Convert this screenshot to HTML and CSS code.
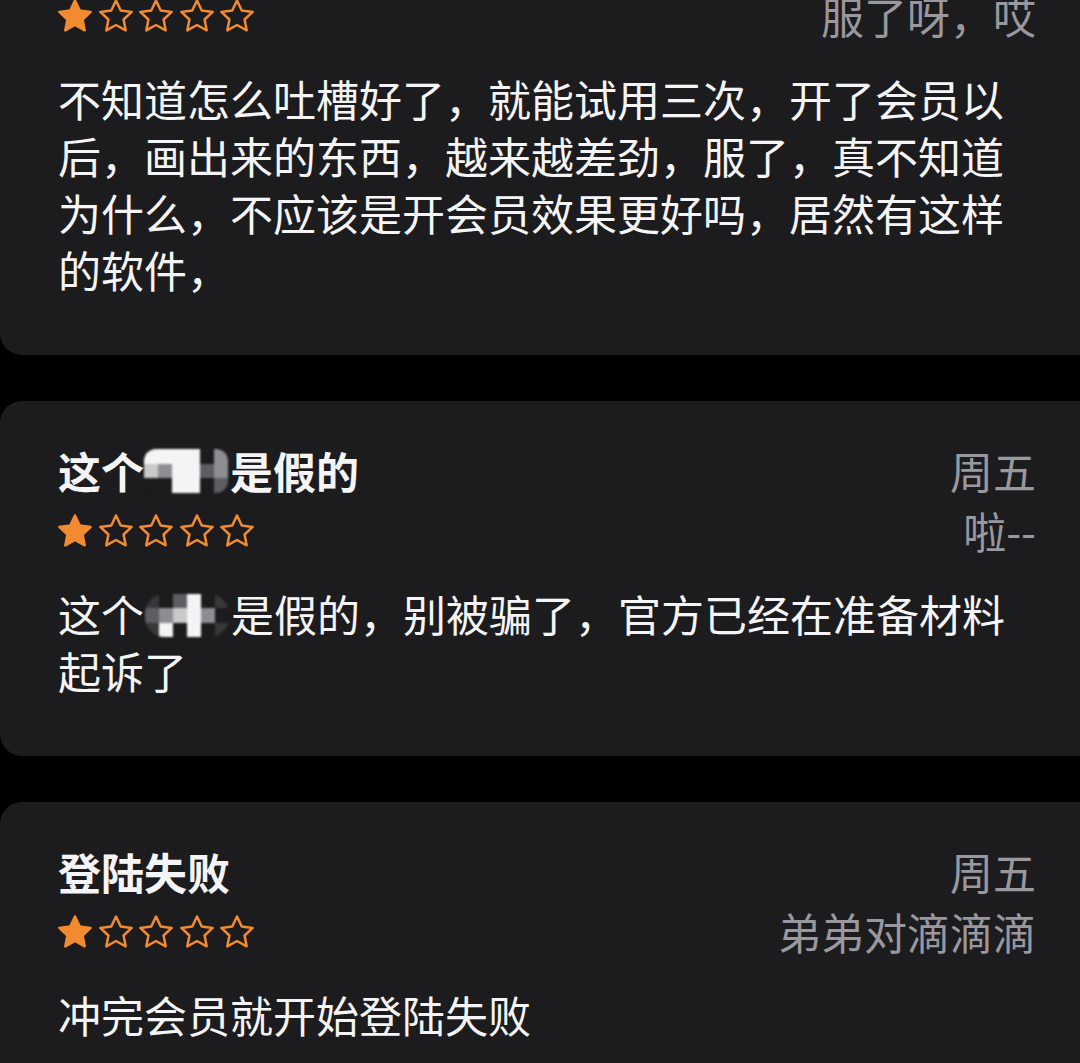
FILE: index.html
```html
<!DOCTYPE html>
<html lang="zh-CN">
<head>
<meta charset="utf-8">
<title>评论</title>
<link rel="stylesheet" href="styles.css">
</head>
<body>
<svg width="0" height="0" class="defs" aria-hidden="true">
  <defs>
    <path id="star" d="M12 2.6l2.85 6.05 6.55.8-4.85 4.55 1.25 6.5L12 17.3l-5.8 3.2 1.25-6.5L2.6 9.45l6.55-.8z"/>
  </defs>
</svg>
<main class="list">
  <article class="review">
    <div class="head">
      <h3 class="title">差评</h3>
      <span class="meta">周五</span>
      <div class="stars">
        <svg class="star full" viewBox="1.8 1.8 20.4 19.6"><use href="#star"/></svg>
        <svg class="star" viewBox="1.8 1.8 20.4 19.6"><use href="#star"/></svg>
        <svg class="star" viewBox="1.8 1.8 20.4 19.6"><use href="#star"/></svg>
        <svg class="star" viewBox="1.8 1.8 20.4 19.6"><use href="#star"/></svg>
        <svg class="star" viewBox="1.8 1.8 20.4 19.6"><use href="#star"/></svg>
      </div>
      <span class="meta">服了呀，哎</span>
    </div>
    <p class="body">不知道怎么吐槽好了，就能试用三次，开了会员以后，画出来的东西，越来越差劲，服了，真不知道为什么，不应该是开会员效果更好吗，居然有这样的软件，</p>
  </article>

  <article class="review">
    <div class="head">
      <h3 class="title">这个<span class="blur blur-title"><i class="w"></i><i class="w"></i><i class="w"></i><i class="w"></i><i class="k"></i><i class="g"></i><i class="l"></i><i class="g"></i><i class="w"></i><i class="w"></i><i class="m"></i><i class="g"></i><i class="k"></i><i class="k"></i><i class="w"></i><i class="w"></i><i class="k"></i><i class="m"></i></span>是假的</h3>
      <span class="meta">周五</span>
      <div class="stars">
        <svg class="star full" viewBox="1.8 1.8 20.4 19.6"><use href="#star"/></svg>
        <svg class="star" viewBox="1.8 1.8 20.4 19.6"><use href="#star"/></svg>
        <svg class="star" viewBox="1.8 1.8 20.4 19.6"><use href="#star"/></svg>
        <svg class="star" viewBox="1.8 1.8 20.4 19.6"><use href="#star"/></svg>
        <svg class="star" viewBox="1.8 1.8 20.4 19.6"><use href="#star"/></svg>
      </div>
      <span class="meta">啦--</span>
    </div>
    <p class="body">这个<span class="blur blur-body"><i class="d"></i><i class="k"></i><i class="m"></i><i class="w"></i><i class="k"></i><i class="d"></i><i class="m"></i><i class="g"></i><i class="l"></i><i class="w"></i><i class="g"></i><i class="k"></i><i class="d"></i><i class="w"></i><i class="k"></i><i class="w"></i><i class="k"></i><i class="d"></i></span>是假的，别被骗了，官方已经在准备材料起诉了</p>
  </article>

  <article class="review">
    <div class="head">
      <h3 class="title">登陆失败</h3>
      <span class="meta">周五</span>
      <div class="stars">
        <svg class="star full" viewBox="1.8 1.8 20.4 19.6"><use href="#star"/></svg>
        <svg class="star" viewBox="1.8 1.8 20.4 19.6"><use href="#star"/></svg>
        <svg class="star" viewBox="1.8 1.8 20.4 19.6"><use href="#star"/></svg>
        <svg class="star" viewBox="1.8 1.8 20.4 19.6"><use href="#star"/></svg>
        <svg class="star" viewBox="1.8 1.8 20.4 19.6"><use href="#star"/></svg>
      </div>
      <span class="meta">弟弟对滴滴滴</span>
    </div>
    <p class="body">冲完会员就开始登陆失败</p>
  </article>
</main>
</body>
</html>
```
FILE: styles.css
```css
html, body {
  margin: 0;
  padding: 0;
  background: #000;
  height: 100%;
  overflow: hidden;
}

body {
  font-family: "Noto Sans CJK SC", "Noto Sans", sans-serif;
  color: #f2f2f4;
}

.defs {
  position: absolute;
  width: 0;
  height: 0;
}

.list {
  display: flex;
  flex-direction: column;
  gap: 46px;
  margin-top: -114px;
}

.review {
  background: #1c1c1e;
  border-radius: 22px 0 0 22px;
  padding: 41px 44px 57px 58px;
}

.head {
  display: grid;
  grid-template-columns: 1fr auto;
  grid-template-rows: 56px 56px;
  row-gap: 4px;
  align-items: center;
}

.title {
  margin: 0;
  font-size: 43px;
  font-weight: 700;
  line-height: 56px;
  color: #f5f5f7;
  white-space: nowrap;
}

.meta {
  font-size: 43px;
  line-height: 56px;
  color: #98989e;
  text-align: right;
  white-space: nowrap;
}

.stars {
  display: flex;
  gap: 6.5px;
  align-items: center;
}

.star {
  width: 34px;
  height: 33px;
  fill: none;
  stroke: #f28b2f;
  stroke-width: 1.5;
  stroke-linejoin: round;
  overflow: visible;
}

.star.full {
  fill: #f28b2f;
}

.body {
  margin: 27px 0 0;
  font-size: 43px;
  line-height: 57px;
  color: #f5f5f7;
}

.blur {
  display: inline-grid;
  grid-template-columns: repeat(6, 1fr);
  grid-template-rows: repeat(3, 1fr);
  width: 84px;
  height: 44px;
  vertical-align: top;
  border-radius: 12px;
  overflow: hidden;
  filter: blur(1.2px);
  transform: translateY(7px);
}

.blur-title {
  margin: 0 2px 0 0;
}

.blur-body {
  background: #2a2a2c;
  border-radius: 20px;
  height: 43px;
  margin: 0 2px 0 1px;
  transform: translateY(9px);
}

.blur i {
  display: block;
}

.blur .w { background: #f4f4f6; }
.blur .l { background: #c9c9cc; }
.blur .g { background: #8e8e92; }
.blur .m { background: #5e5e62; }
.blur .d { background: #38383b; }
.blur .k { background: #1c1c1e; }
```
